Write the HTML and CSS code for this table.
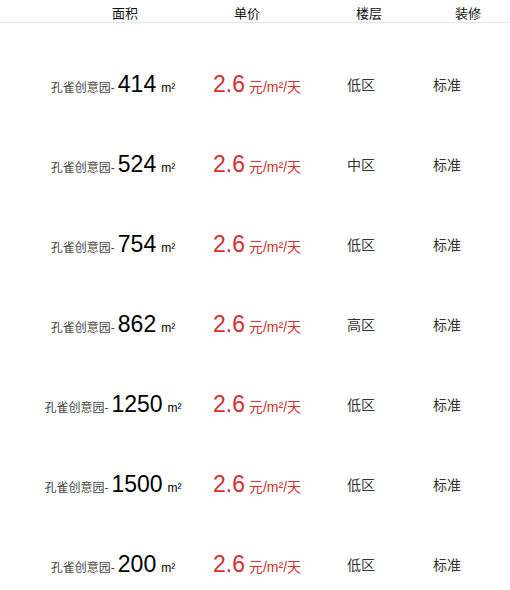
FILE: index.html
```html
<!DOCTYPE html>
<html lang="zh">
<head>
<meta charset="utf-8">
<link rel="stylesheet" href="styles.css">
</head>
<body>
<div class="head">
  <div class="hcell">面积</div>
  <div class="hcell">单价</div>
  <div class="hcell">楼层</div>
  <div class="hcell">装修</div>
</div>
<div class="list">
  <div class="row"><div class="area"><span class="name">孔雀创意园-</span><span class="num">414</span><span class="unit">m²</span></div><div class="price"><span class="pnum">2.6</span><span class="punit">元/m²/天</span></div><div class="floor">低区</div><div class="deco">标准</div></div>
  <div class="row"><div class="area"><span class="name">孔雀创意园-</span><span class="num">524</span><span class="unit">m²</span></div><div class="price"><span class="pnum">2.6</span><span class="punit">元/m²/天</span></div><div class="floor">中区</div><div class="deco">标准</div></div>
  <div class="row"><div class="area"><span class="name">孔雀创意园-</span><span class="num">754</span><span class="unit">m²</span></div><div class="price"><span class="pnum">2.6</span><span class="punit">元/m²/天</span></div><div class="floor">低区</div><div class="deco">标准</div></div>
  <div class="row"><div class="area"><span class="name">孔雀创意园-</span><span class="num">862</span><span class="unit">m²</span></div><div class="price"><span class="pnum">2.6</span><span class="punit">元/m²/天</span></div><div class="floor">高区</div><div class="deco">标准</div></div>
  <div class="row"><div class="area"><span class="name">孔雀创意园-</span><span class="num">1250</span><span class="unit">m²</span></div><div class="price"><span class="pnum">2.6</span><span class="punit">元/m²/天</span></div><div class="floor">低区</div><div class="deco">标准</div></div>
  <div class="row"><div class="area"><span class="name">孔雀创意园-</span><span class="num">1500</span><span class="unit">m²</span></div><div class="price"><span class="pnum">2.6</span><span class="punit">元/m²/天</span></div><div class="floor">低区</div><div class="deco">标准</div></div>
  <div class="row"><div class="area"><span class="name">孔雀创意园-</span><span class="num">200</span><span class="unit">m²</span></div><div class="price"><span class="pnum">2.6</span><span class="punit">元/m²/天</span></div><div class="floor">低区</div><div class="deco">标准</div></div>
</div>
</body>
</html>
```
FILE: styles.css
```css
html, body {
  margin: 0;
  padding: 0;
  background: #fff;
}
body {
  font-family: "Liberation Sans", "Noto Sans CJK SC", sans-serif;
  color: #333;
  overflow: hidden;
}
.head {
  display: grid;
  grid-template-columns: 122px 122px 122px 76px;
  padding-left: 64px;
  height: 22px;
  border-bottom: 1px solid #e6e6e6;
  align-items: center;
}
.hcell {
  text-align: center;
  font-size: 13px;
  color: #111;
  line-height: 22px;
  padding-top: 3px;
}
.list {
  padding-top: 21px;
}
.row {
  display: grid;
  grid-template-columns: 198px 90px 102px 86px;
  padding-left: 14px;
  height: 80px;
  align-items: center;
}
.area, .price, .floor, .deco {
  display: flex;
  justify-content: center;
  align-items: baseline;
  white-space: nowrap;
}
.name {
  font-size: 12px;
  color: #444;
}
.num {
  font-size: 23px;
  color: #000;
  margin: 0 5px 0 3px;
}
.unit {
  font-size: 12px;
  color: #000;
}
.pnum {
  font-size: 23px;
  color: #d1302e;
  margin-right: 4px;
}
.punit {
  font-size: 14px;
  color: #d1302e;
}
.floor {
  padding-left: 16px;
  font-size: 14px;
  color: #333;
}
.deco {
  font-size: 14px;
  color: #333;
}
```
